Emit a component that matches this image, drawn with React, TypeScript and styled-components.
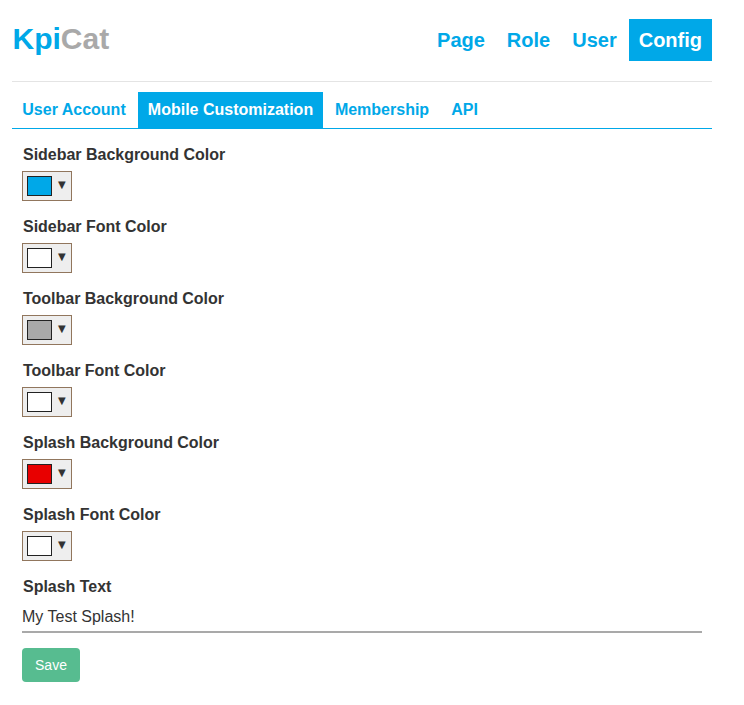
import React from 'react';
import styled, { createGlobalStyle } from 'styled-components';

const Global = createGlobalStyle`
  *, *::before, *::after { box-sizing: border-box; }
  body { margin: 0; background: #fff; color: #333; font-family: "Liberation Sans", Arial, sans-serif; font-size: 16px; }
`;

const Page = styled.div`
  width: 700px;
  margin-left: 12px;
`;

const Header = styled.header`
  display: flex;
  justify-content: space-between;
  height: 82px;
  padding-top: 19px;
  border-bottom: 1px solid #e4e4e4;
`;

const Logo = styled.div`
  padding-left: 0.5px;
  font-size: 30px;
  font-weight: 700;
  line-height: 40px;
  color: #00a8e8;
`;

const LogoTail = styled.span`
  color: #a9a9a9;
`;

const MainNav = styled.nav`
  display: flex;
  gap: 2px;
  height: 42px;
`;

const MainLink = styled.a<{ $active?: boolean }>`
  padding: 0 10px;
  font-size: 20px;
  font-weight: 700;
  line-height: 42px;
  color: ${(p) => (p.$active ? '#fff' : '#00a8e8')};
  background: ${(p) => (p.$active ? '#00a8e8' : 'transparent')};
`;

const Tabs = styled.nav`
  display: flex;
  gap: 2px;
  height: 47px;
  padding-top: 10px;
  border-bottom: 1px solid #00a8e8;
`;

const Tab = styled.a<{ $active?: boolean; $width: number }>`
  width: ${(p) => p.$width}px;
  text-align: center;
  white-space: nowrap;
  font-weight: 700;
  line-height: 35px;
  color: ${(p) => (p.$active ? '#fff' : '#00a8e8')};
  background: ${(p) => (p.$active ? '#00a8e8' : 'transparent')};
`;

const Form = styled.form`
  padding: 16px 10px 0;
`;

const Field = styled.div`
  height: 72px;
`;

const Label = styled.label`
  display: block;
  height: 26px;
  padding-left: 1px;
  font-weight: 700;
  line-height: 20px;
  letter-spacing: -0.02px;
`;

const Picker = styled.button`
  display: flex;
  align-items: flex-start;
  width: 50px;
  height: 30px;
  padding: 4px;
  border: 1px solid #91765d;
  background: #eee;
`;

const Swatch = styled.span<{ $color: string }>`
  width: 25px;
  height: 20px;
  border: 1px solid #222;
  background: ${(p) => p.$color};
`;

const Arrow = styled.span`
  margin-left: 6px;
  font-family: "DejaVu Sans", sans-serif;
  font-size: 10px;
  line-height: 18px;
  color: #333;
`;

const TextInput = styled.input`
  display: block;
  width: 680px;
  height: 30px;
  padding: 0;
  border: 0;
  border-bottom: 2px solid #a9a9a9;
  font: inherit;
  color: #333;
  outline: none;
`;

const Save = styled.button`
  width: 58px;
  height: 34px;
  margin-top: 15px;
  padding: 0;
  border: 0;
  border-radius: 4px;
  background: #57bc90;
  color: #fff;
  font: 14px "Liberation Sans", Arial, sans-serif;
`;

const colors = [
  { label: 'Sidebar Background Color', color: '#00a8e8' },
  { label: 'Sidebar Font Color', color: '#fff' },
  { label: 'Toolbar Background Color', color: '#a9a9a9' },
  { label: 'Toolbar Font Color', color: '#fff' },
  { label: 'Splash Background Color', color: '#e80000' },
  { label: 'Splash Font Color', color: '#fff' },
];

export default function App() {
  return (
    <Page>
      <Global />
      <Header>
        <Logo>Kpi<LogoTail>Cat</LogoTail></Logo>
        <MainNav>
          <MainLink>Page</MainLink>
          <MainLink>Role</MainLink>
          <MainLink>User</MainLink>
          <MainLink $active>Config</MainLink>
        </MainNav>
      </Header>
      <Tabs>
        <Tab $width={124}>User Account</Tab>
        <Tab $width={185} $active>Mobile Customization</Tab>
        <Tab $width={114}>Membership</Tab>
        <Tab $width={47}>API</Tab>
      </Tabs>
      <Form>
        {colors.map((c) => (
          <Field key={c.label}>
            <Label>{c.label}</Label>
            <Picker type="button">
              <Swatch $color={c.color} />
              <Arrow>▼</Arrow>
            </Picker>
          </Field>
        ))}
        <Label htmlFor="splash">Splash Text</Label>
        <TextInput id="splash" defaultValue="My Test Splash!" />
        <Save type="button">Save</Save>
      </Form>
    </Page>
  );
}
